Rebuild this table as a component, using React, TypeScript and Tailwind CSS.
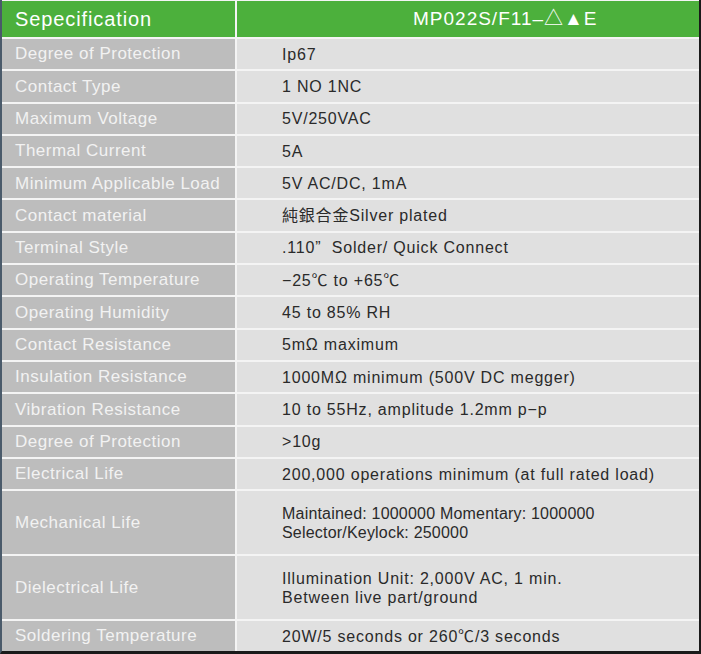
const ROWS: { label: string; value: string[]; h: string; track?: string }[] = [
  { label: "Degree of Protection", value: ["Ip67"], h: "h-[30.3px]" },
  { label: "Contact Type", value: ["1 NO 1NC"], h: "h-[30.3px]" },
  { label: "Maximum Voltage", value: ["5V/250VAC"], h: "h-[30.3px]" },
  { label: "Thermal Current", value: ["5A"], h: "h-[30.3px]" },
  { label: "Minimum Applicable Load", value: ["5V AC/DC, 1mA"], h: "h-[30.3px]" },
  { label: "Contact material", value: ["純銀合金Silver plated"], h: "h-[30.3px]" },
  { label: "Terminal Style", value: [".110\u201D  Solder/ Quick Connect"], h: "h-[30.3px]" },
  { label: "Operating Temperature", value: ["\u221225\u2103 to +65\u2103"], h: "h-[30.3px]" },
  { label: "Operating Humidity", value: ["45 to 85% RH"], h: "h-[30.3px]" },
  { label: "Contact Resistance", value: ["5m\u03A9 maximum"], h: "h-[30.3px]" },
  { label: "Insulation Resistance", value: ["1000M\u03A9 minimum (500V DC megger)"], h: "h-[30.3px]" },
  { label: "Vibration Resistance", value: ["10 to 55Hz, amplitude 1.2mm p\u2212p"], h: "h-[30.3px]" },
  { label: "Degree of Protection", value: [">10g"], h: "h-[30.3px]" },
  { label: "Electrical Life", value: ["200,000 operations minimum (at full rated load)"], h: "h-[30.3px]" },
  {
    label: "Mechanical Life",
    value: ["Maintained: 1000000 Momentary: 1000000", "Selector/Keylock: 250000"],
    h: "h-[63px]",
    track: "tracking-[0.2px]",
  },
  {
    label: "Dielectrical Life",
    value: ["Illumination Unit: 2,000V AC, 1 min.", "Between live part/ground"],
    h: "h-[63px]",
  },
  { label: "Soldering Temperature", value: ["20W/5 seconds or 260\u2103/3 seconds"], h: "h-[29.8px]" },
];

export default function App() {
  return (
    <div
      className="h-[654px] w-[701px] overflow-hidden bg-[#f4f4f4]"
      style={{ fontFamily: '"Liberation Sans", Arial, "Noto Sans CJK TC", sans-serif' }}
    >
      <div className="h-[654px] border-b-[3px] border-l-2 border-r-2 border-b-[#1a1a1a] border-l-[#4a5a6a] border-r-[#1a1a1a] pt-[1px]">
        <div className="grid grid-cols-[233px_1fr] gap-x-[2px] gap-y-[2px]">
          <div className="flex h-[36px] items-center bg-[#4cb03c] pl-[13px] text-[20px] tracking-[0.9px] text-white">
            Sepecification
          </div>
          <div className="flex h-[36px] items-center bg-[#4cb03c] pl-[176px] text-[19px] tracking-[1px] text-white">
            MP022S/F11–△▲E
          </div>
          {ROWS.map((row, i) => (
            <Row key={i} label={row.label} value={row.value} h={row.h} track={row.track} />
          ))}
        </div>
      </div>
    </div>
  );
}

function Row({ label, value, h, track }: { label: string; value: string[]; h: string; track?: string }) {
  return (
    <>
      <div className={`flex items-center bg-[#bdbdbd] pl-[13px] text-[17px] tracking-[0.5px] text-[#f2f2f2] ${h}`}>
        {label}
      </div>
      <div
        className={`flex flex-col justify-center bg-[#e0e0e0] pl-[45px] text-[16px] leading-[19px] text-[#2a2a2a] ${
          track ?? "tracking-[0.8px]"
        } ${h}`}
      >
        {value.map((v) => (
          <span key={v} className="whitespace-pre">
            {v}
          </span>
        ))}
      </div>
    </>
  );
}
